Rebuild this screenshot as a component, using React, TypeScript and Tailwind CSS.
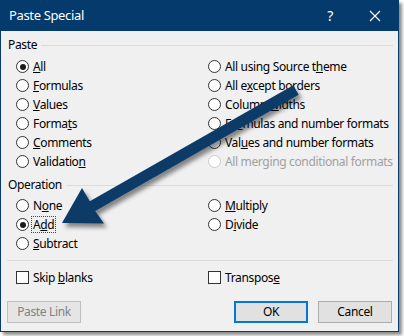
import type { ReactNode } from "react";

const font = { fontFamily: '"Noto Sans", "Open Sans", sans-serif' };

function Radio({ checked, disabled, focus, children }: { checked?: boolean; disabled?: boolean; focus?: boolean; children: ReactNode }) {
  return (
    <div className="flex h-[19px] items-center">
      <span
        className={`flex h-[13px] w-[13px] shrink-0 items-center justify-center rounded-full border bg-white ${
          disabled ? "border-[#cccccc]" : "border-[#333333]"
        }`}
      >
        {checked && <span className="h-[6px] w-[6px] rounded-full bg-[#1a1a1a]" />}
      </span>
      <span
        className={`ml-[3px] px-[1px] leading-[15px] ${disabled ? "text-[#a0a0a0]" : "text-black"} ${
          focus ? "outline-1 outline-dotted outline-[#444]" : ""
        }`}
      >
        {children}
      </span>
    </div>
  );
}

function Check({ children }: { children: ReactNode }) {
  return (
    <div className="flex h-[19px] items-center">
      <span className="h-[13px] w-[13px] shrink-0 border border-[#333333] bg-white" />
      <span className="ml-[4px] text-black">{children}</span>
    </div>
  );
}

function Group({ title }: { title: string }) {
  return (
    <div className="flex h-[18px] items-center pl-[7px] pr-[5px]">
      <span className="text-black">{title}</span>
      <span className="ml-[4px] h-px flex-1 bg-[#dcdcdc]" />
    </div>
  );
}

function Button({ children, primary, disabled }: { children: ReactNode; primary?: boolean; disabled?: boolean }) {
  return (
    <div
      className={`flex h-[22px] w-[74px] items-center justify-center bg-[#e1e1e1] ${
        primary ? "border-2 border-[#0078d7]" : "border border-[#adadad]"
      } ${disabled ? "border-[#bfbfbf] bg-[#e5e5e5] text-[#838383]" : "text-black"}`}
    >
      <span>{children}</span>
    </div>
  );
}

export default function App() {
  return (
    <div className="relative h-[336px] w-[404px] bg-white text-[12px] tracking-[-0.35px]" style={font}>
      <div className="flex h-[332px] w-[399px] flex-col border border-t-0 border-[#0b3b6c] bg-[#f0f0f0] shadow-[3px_3px_3px_rgba(0,0,0,0.45)]">
        {/* title bar */}
        <div className="-mx-px flex h-[31px] shrink-0 items-center bg-[#053a6c] text-white">
          <span className="flex-1 pl-[9px] text-[13px]">Paste Special</span>
          <span className="mr-[36px] text-[14px]">?</span>
          <svg width="12" height="12" viewBox="0 0 12 12" className="mr-[18px]">
            <path d="M1 1L11 11M11 1L1 11" stroke="white" strokeWidth="1.2" />
          </svg>
        </div>

        <div className="pt-[5px]">
          <Group title="Paste" />
          <div className="mt-[3px] grid grid-cols-[192px_1fr] pl-[15px]">
            <div>
              <Radio checked>
                <u>A</u>ll
              </Radio>
              <Radio>
                <u>F</u>ormulas
              </Radio>
              <Radio>
                <u>V</u>alues
              </Radio>
              <Radio>
                Forma<u>t</u>s
              </Radio>
              <Radio>
                <u>C</u>omments
              </Radio>
              <Radio>
                Validatio<u>n</u>
              </Radio>
            </div>
            <div>
              <Radio>
                All using Source t<u>h</u>eme
              </Radio>
              <Radio>
                All e<u>x</u>cept borders
              </Radio>
              <Radio>
                Column <u>w</u>idths
              </Radio>
              <Radio>
                Fo<u>r</u>mulas and number formats
              </Radio>
              <Radio>
                Val<u>u</u>es and number formats
              </Radio>
              <Radio disabled>All merging conditional formats</Radio>
            </div>
          </div>

          <div className="mt-[5px]">
            <Group title="Operation" />
          </div>
          <div className="mt-[2px] grid grid-cols-[192px_1fr] pl-[15px]">
            <div>
              <Radio>
                N<u>o</u>ne
              </Radio>
              <Radio checked focus>
                A<u>d</u>d
              </Radio>
              <Radio>
                <u>S</u>ubtract
              </Radio>
            </div>
            <div>
              <Radio>
                <u>M</u>ultiply
              </Radio>
              <Radio>
                D<u>i</u>vide
              </Radio>
            </div>
          </div>

          <div className="ml-[6px] mr-[5px] mt-[7px] h-px bg-[#dcdcdc]" />

          <div className="mt-[7px] grid grid-cols-[192px_1fr] pl-[15px]">
            <Check>
              Skip <u>b</u>lanks
            </Check>
            <Check>
              Transpos<u>e</u>
            </Check>
          </div>

          <div className="mt-[14px] flex items-center px-[6px]">
            <Button disabled>Paste Link</Button>
            <div className="flex-1" />
            <Button primary>OK</Button>
            <div className="w-[10px]" />
            <Button>Cancel</Button>
          </div>
        </div>
      </div>

      {/* callout arrow */}
      <svg className="pointer-events-none absolute left-0 top-0" width="404" height="336" viewBox="0 0 404 336">
        <defs>
          <filter id="sh" x="-20%" y="-20%" width="140%" height="140%">
            <feDropShadow dx="3" dy="4" stdDeviation="2" floodColor="#000" floodOpacity="0.45" />
          </filter>
        </defs>
        <polygon
          points="293.3,85.2 89.8,201.3 82,188 62,223 104,223.5 95.2,210.9 298.7,94.8"
          fill="#0b3a68"
          filter="url(#sh)"
        />
      </svg>
    </div>
  );
}
